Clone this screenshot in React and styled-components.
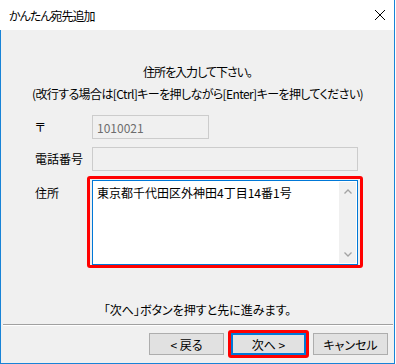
import React from "react";
import styled, { createGlobalStyle } from "styled-components";

const GlobalStyle = createGlobalStyle`
  html, body {
    margin: 0;
    padding: 0;
    background: #ffffff;
  }
  body {
    font-family: "Noto Sans CJK JP", "Noto Sans", sans-serif;
    font-size: 12px;
    color: #000;
    font-feature-settings: "palt";
  }
`;

const Window = styled.div`
  width: 395px;
  border-right: 1px solid #1883d7;
  box-sizing: border-box;
`;

const TitleBar = styled.div`
  height: 30px;
  background: #fff;
  display: flex;
  align-items: center;
  justify-content: space-between;
  padding: 0 9px 0 9px;
  box-sizing: border-box;
`;

const Title = styled.span`
  font-size: 12px;
  line-height: 16px;
  padding-top: 1px;
  letter-spacing: -1px;
`;

const CloseButton = styled.div`
  width: 10px;
  height: 10px;
  display: flex;
`;

const Body = styled.div`
  background: #f0f0f0;
  border-left: 1px solid #1883d7;
  border-bottom: 1px solid #1883d7;
  padding: 32px 0 8px 0;
`;

const Prompt = styled.p`
  margin: ${(p) => (p.$gap ? "2px" : "0")} 0 0 0;
  text-align: center;
  line-height: 20px;
  letter-spacing: ${(p) => p.$spacing || "0"};
`;

const Form = styled.div`
  display: grid;
  grid-template-columns: 57px 1fr;
  row-gap: 8px;
  margin-top: 11px;
  padding: 0 36px 0 34px;
`;

const Label = styled.div`
  display: flex;
  align-items: ${(p) => (p.$top ? "flex-start" : "center")};
  padding-top: ${(p) => (p.$top ? "3px" : "0")};
  margin-top: ${(p) => (p.$top ? "1px" : "0")};
  line-height: 20px;
`;

const Input = styled.div`
  height: 24px;
  width: ${(p) => p.$width || "100%"};
  box-sizing: border-box;
  border: 1px solid #cccccc;
  background: #f0f0f0;
  color: #6d6d6d;
  display: flex;
  align-items: center;
  padding: 0 4px;
  font-size: 12px;
`;

const Highlight = styled.div`
  position: relative;
  margin-top: 1px;
  &::after {
    content: "";
    position: absolute;
    inset: -4px -5px -3px -5px;
    border: 3px solid #ff0000;
    border-radius: 3px;
    pointer-events: none;
  }
`;

const TextBox = styled.div`
  height: 85px;
  box-sizing: border-box;
  border: 1px solid #0078d7;
  background: #fff;
  display: flex;
  padding: 1px;
`;

const TextArea = styled.textarea`
  flex: 1;
  border: none;
  outline: none;
  resize: none;
  background: transparent;
  font-family: inherit;
  font-size: 12px;
  font-feature-settings: "palt";
  color: #000;
  line-height: 18px;
  padding: 2px 3px;
  margin: 0;
`;

const ScrollTrack = styled.div`
  width: 17px;
  background: #f0f0f0;
  display: flex;
  flex-direction: column;
  justify-content: space-between;
  align-items: center;
  padding: 7px 0 6px;
  box-sizing: border-box;
`;

const Note = styled.p`
  margin: 35px 0 0 0;
  text-align: center;
  line-height: 20px;
`;

const Separator = styled.div`
  margin: 4px 1px 0 2px;
  border-top: 1px solid #a0a0a0;
  border-bottom: 1px solid #ffffff;
`;

const ButtonRow = styled.div`
  display: flex;
  justify-content: flex-end;
  gap: 7px;
  margin-top: 7px;
  padding-right: 6px;
`;

const Button = styled.div`
  position: relative;
  width: 75px;
  height: 22px;
  box-sizing: border-box;
  background: #e1e1e1;
  border: ${(p) => (p.$focused ? "2px solid #0078d7" : "1px solid #adadad")};
  display: flex;
  align-items: center;
  justify-content: center;
  font-size: 12px;
  ${(p) =>
    p.$marked &&
    `
    &::after {
      content: "";
      position: absolute;
      inset: -5px;
      border: 3px solid #ff0000;
      border-radius: 3px;
    }
  `}
`;

const Chevron = ({ up }) => (
  <svg width="8" height="5" viewBox="0 0 8 5">
    <path
      d={up ? "M0.5 4.5 L4 1 L7.5 4.5" : "M0.5 0.5 L4 4 L7.5 0.5"}
      fill="none"
      stroke="#a3a3a3"
      strokeWidth="1.3"
    />
  </svg>
);

const App = () => {
  return (
    <React.Fragment>
      <GlobalStyle />
      <Window>
        <TitleBar>
          <Title>かんたん宛先追加</Title>
          <CloseButton>
            <svg width="10" height="10" viewBox="0 0 10 10">
              <path d="M0 0 L10 10 M10 0 L0 10" stroke="#000" strokeWidth="1" />
            </svg>
          </CloseButton>
        </TitleBar>
        <Body>
          <Prompt $spacing="-1px">住所を入力して下さい。</Prompt>
          <Prompt $gap $spacing="-0.6px">
            (改行する場合は[Ctrl]キーを押しながら[Enter]キーを押してください)
          </Prompt>
          <Form>
            <Label>〒</Label>
            <Input $width="117px">1010021</Input>
            <Label>電話番号</Label>
            <Input />
            <Label $top>住所</Label>
            <Highlight>
              <TextBox>
                <TextArea readOnly defaultValue="東京都千代田区外神田4丁目14番1号" />
                <ScrollTrack>
                  <Chevron up />
                  <Chevron />
                </ScrollTrack>
              </TextBox>
            </Highlight>
          </Form>
          <Note>「次へ」ボタンを押すと先に進みます。</Note>
          <Separator />
          <ButtonRow>
            <Button>&lt; 戻る</Button>
            <Button $focused $marked>
              次へ &gt;
            </Button>
            <Button>キャンセル</Button>
          </ButtonRow>
        </Body>
      </Window>
    </React.Fragment>
  );
};

export default App;
